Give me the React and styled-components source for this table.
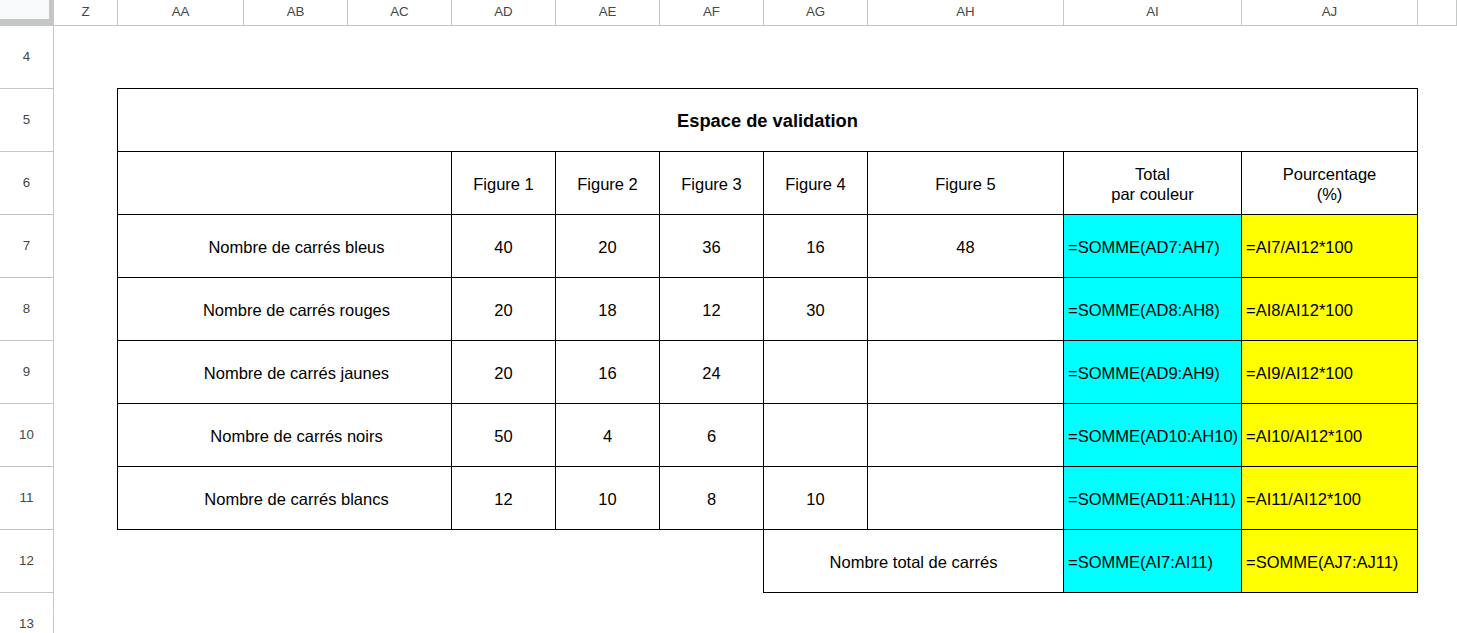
import React from "react";
import styled, { createGlobalStyle, css } from "styled-components";

const GlobalStyle = createGlobalStyle`
  html, body {
    margin: 0;
    padding: 0;
    background: #fff;
    overflow: hidden;
  }
  body {
    font-family: "Liberation Sans", Arial, sans-serif;
  }
`;

const Sheet = styled.div`
  display: grid;
  grid-template-columns: 54px 64px 126px repeat(6, 104px) 196px 178px 176px 1fr;
  grid-template-rows: 26px repeat(10, 63px);
  width: 1457px;
  height: 633px;
  overflow: hidden;
  background: #fff;
`;

const Corner = styled.div`
  background: #f8f9fa;
  border-right: 5px solid #c4c7c5;
  border-bottom: 7px solid #c4c7c5;
`;

const HeaderCell = styled.div`
  display: flex;
  align-items: center;
  justify-content: center;
  padding-bottom: 2px;
  border-right: 1px solid #c4c7c5;
  border-bottom: 1px solid #c4c7c5;
  font-size: 13.3px;
  color: #444746;
`;

const RowHead = styled(HeaderCell)`
  background: #fff;
`;

const Blank = styled.div`
  grid-column: span ${(p) => p.$span || 1};
`;

const Cell = styled.div`
  grid-column: span ${(p) => p.$span || 1};
  display: flex;
  align-items: center;
  justify-content: ${(p) => (p.$left ? "flex-start" : "center")};
  text-align: center;
  padding: 2px ${(p) => (p.$left ? "3px" : "0")} 0;
  padding-left: ${(p) => (p.$indent ? "24px" : p.$left ? "4px" : "0")};
  background: ${(p) => p.$bg || "#fff"};
  color: #000;
  font-size: ${(p) => (p.$bold ? "18.3px" : "16.5px")};
  font-weight: ${(p) => (p.$bold ? 700 : 400)};
  line-height: 20px;
  white-space: pre;
  overflow: hidden;
  border-right: 1px solid #000;
  border-bottom: 1px solid #000;
  ${(p) =>
    p.$leftEdge &&
    css`
      margin-left: -1px;
      border-left: 1px solid #000;
    `}
  ${(p) =>
    p.$topEdge &&
    css`
      margin-top: -1px;
      border-top: 1px solid #000;
    `}
`;

const columns = ["Z", "AA", "AB", "AC", "AD", "AE", "AF", "AG", "AH", "AI", "AJ", ""];

const rows = [
  { n: 7, label: "Nombre de carrés bleus", values: ["40", "20", "36", "16", "48"] },
  { n: 8, label: "Nombre de carrés rouges", values: ["20", "18", "12", "30", ""] },
  { n: 9, label: "Nombre de carrés jaunes", values: ["20", "16", "24", "", ""] },
  { n: 10, label: "Nombre de carrés noirs", values: ["50", "4", "6", "", ""] },
  { n: 11, label: "Nombre de carrés blancs", values: ["12", "10", "8", "10", ""] },
];

const CYAN = "#00ffff";
const YELLOW = "#ffff00";

export default function App() {
  return (
    <>
      <GlobalStyle />
      <Sheet>
        <Corner />
        {columns.map((c, i) => (
          <HeaderCell key={i}>{c}</HeaderCell>
        ))}

        <RowHead>4</RowHead>
        <Blank $span={12} />

        <RowHead>5</RowHead>
        <Blank />
        <Cell $span={10} $bold $leftEdge $topEdge>
          Espace de validation
        </Cell>
        <Blank />

        <RowHead>6</RowHead>
        <Blank />
        <Cell $span={3} $leftEdge />
        {[1, 2, 3, 4, 5].map((f) => (
          <Cell key={f}>{`Figure ${f}`}</Cell>
        ))}
        <Cell>{"Total\npar couleur"}</Cell>
        <Cell>{"Pourcentage\n(%)"}</Cell>
        <Blank />

        {rows.map((r) => (
          <React.Fragment key={r.n}>
            <RowHead>{r.n}</RowHead>
            <Blank />
            <Cell $span={3} $leftEdge $indent>
              {r.label}
            </Cell>
            {r.values.map((v, i) => (
              <Cell key={i}>{v}</Cell>
            ))}
            <Cell $left $bg={CYAN}>{`=SOMME(AD${r.n}:AH${r.n})`}</Cell>
            <Cell $left $bg={YELLOW}>{`=AI${r.n}/AI12*100`}</Cell>
            <Blank />
          </React.Fragment>
        ))}

        <RowHead>12</RowHead>
        <Blank $span={7} />
        <Cell $span={2} $leftEdge>
          Nombre total de carrés
        </Cell>
        <Cell $left $bg={CYAN}>=SOMME(AI7:AI11)</Cell>
        <Cell $left $bg={YELLOW}>=SOMME(AJ7:AJ11)</Cell>
        <Blank />

        <RowHead>13</RowHead>
        <Blank $span={12} />
      </Sheet>
    </>
  );
}
